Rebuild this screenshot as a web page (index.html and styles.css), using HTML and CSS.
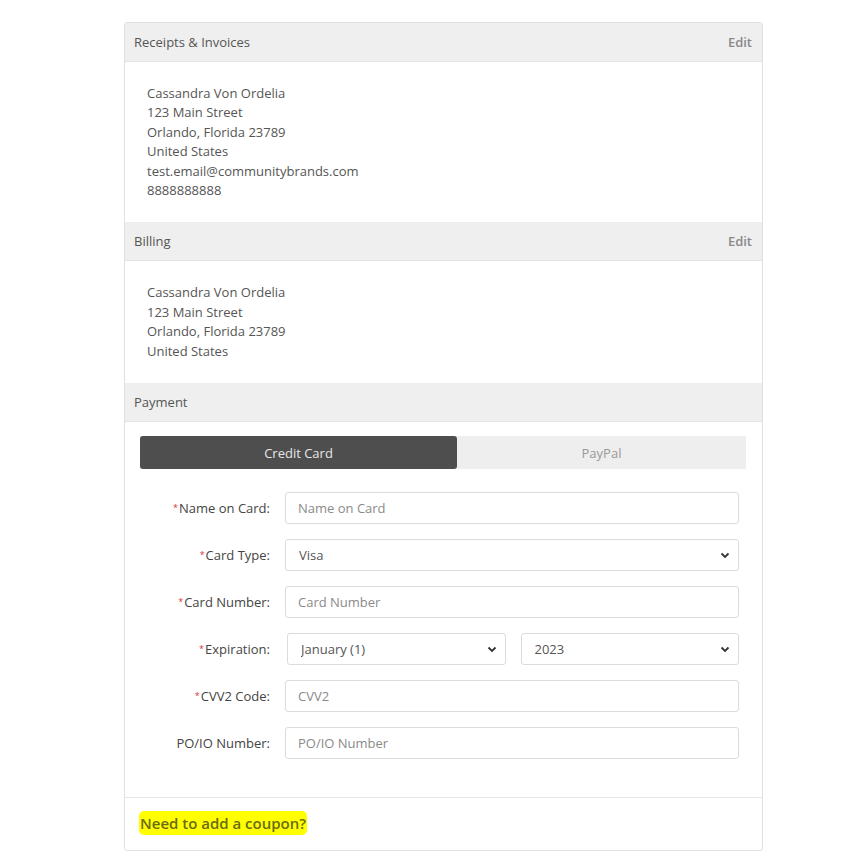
FILE: index.html
```html
<!DOCTYPE html>
<html lang="en">
<head>
    <meta charset="UTF-8">
    <meta name="viewport" content="width=device-width, initial-scale=1.0">
    <title>Checkout</title>
    <link rel="stylesheet" href="styles.css">
</head>
<body>
    <div class="panel">
        <div class="panel-heading">
            <span>Receipts &amp; Invoices</span>
            <a href="#" class="edit">Edit</a>
        </div>
        <div class="panel-body address">
            <div>Cassandra Von Ordelia</div>
            <div>123 Main Street</div>
            <div>Orlando, Florida 23789</div>
            <div>United States</div>
            <div>test.email@communitybrands.com</div>
            <div>8888888888</div>
        </div>

        <div class="panel-heading">
            <span>Billing</span>
            <a href="#" class="edit">Edit</a>
        </div>
        <div class="panel-body address">
            <div>Cassandra Von Ordelia</div>
            <div>123 Main Street</div>
            <div>Orlando, Florida 23789</div>
            <div>United States</div>
        </div>

        <div class="panel-heading">
            <span>Payment</span>
        </div>
        <div class="panel-body payment">
            <div class="tabs">
                <button class="tab active">Credit Card</button>
                <button class="tab">PayPal</button>
            </div>

            <form class="card-form">
                <div class="form-row">
                    <label><span class="req">*</span>Name on Card:</label>
                    <input type="text" placeholder="Name on Card">
                </div>
                <div class="form-row">
                    <label><span class="req">*</span>Card Type:</label>
                    <div class="select">
                        <select><option>Visa</option></select>
                        <svg class="chev" width="10" height="7" viewBox="0 0 10 7"><path d="M1.5 1.5 L5 5 L8.5 1.5" fill="none" stroke="#333" stroke-width="1.8"/></svg>
                    </div>
                </div>
                <div class="form-row">
                    <label><span class="req">*</span>Card Number:</label>
                    <input type="text" placeholder="Card Number">
                </div>
                <div class="form-row">
                    <label><span class="req">*</span>Expiration:</label>
                    <div class="split">
                        <div class="select month">
                            <select><option>January (1)</option></select>
                            <svg class="chev" width="10" height="7" viewBox="0 0 10 7"><path d="M1.5 1.5 L5 5 L8.5 1.5" fill="none" stroke="#333" stroke-width="1.8"/></svg>
                        </div>
                        <div class="select">
                            <select><option>2023</option></select>
                            <svg class="chev" width="10" height="7" viewBox="0 0 10 7"><path d="M1.5 1.5 L5 5 L8.5 1.5" fill="none" stroke="#333" stroke-width="1.8"/></svg>
                        </div>
                    </div>
                </div>
                <div class="form-row">
                    <label><span class="req">*</span>CVV2 Code:</label>
                    <input type="text" placeholder="CVV2">
                </div>
                <div class="form-row">
                    <label>PO/IO Number:</label>
                    <input type="text" placeholder="PO/IO Number">
                </div>
            </form>
        </div>

        <div class="panel-footer">
            <a href="#" class="coupon">Need to add a coupon?</a>
        </div>
    </div>
</body>
</html>
```

FILE: styles.css
```css
body {
    font-family: "Open Sans", "Liberation Sans", sans-serif;
    font-size: 13px;
    color: #555;
    background-color: #fff;
    margin: 0;
    padding: 22px 0 14px 124px;
}

.panel {
    width: 637px;
    border: 1px solid #e0e0e0;
    border-radius: 3px;
    background-color: #fff;
}

.panel-heading {
    display: flex;
    justify-content: space-between;
    align-items: center;
    height: 38px;
    padding: 0 10px 0 9px;
    background-color: #efefef;
    border-bottom: 1px solid #e3e3e3;
    color: #555;
}

.edit {
    color: #8a8a8a;
    font-weight: 600;
    text-decoration: none;
}

.address {
    padding: 22px 22px;
    line-height: 19.4px;
}

.payment {
    padding: 14px 16px 38px 15px;
    border-bottom: 1px solid #e6e6e6;
}

.tabs {
    display: flex;
    height: 33px;
    background-color: #eee;
}

.tab {
    border: none;
    font-family: inherit;
    font-size: 13px;
    background: transparent;
    color: #999;
    padding: 0;
    cursor: pointer;
}

.tab.active {
    width: 317px;
    background-color: #4e4e4e;
    color: #e6e6e6;
    border-radius: 3px;
}

.tab:not(.active) {
    flex: 1;
}

.card-form {
    margin-top: 23px;
    display: flex;
    flex-direction: column;
    gap: 15px;
    padding-right: 7px;
}

.form-row {
    display: flex;
    align-items: center;
    gap: 15px;
}

.form-row label {
    width: 130px;
    text-align: right;
    color: #444;
}

.req {
    color: #d9363e;
    font-size: 9px;
    vertical-align: 2px;
    margin-right: 1px;
}

.form-row input,
.select {
    flex: 1;
}

.form-row input,
.select select {
    box-sizing: border-box;
    height: 32px;
    width: 100%;
    border: 1px solid #dcdcdc;
    border-radius: 3px;
    padding: 0 12px;
    font-family: inherit;
    font-size: 13px;
    color: #555;
    background-color: #fff;
}

.form-row input::placeholder {
    color: #8a8a8a;
}

.select {
    position: relative;
}

.select select {
    appearance: none;
    -webkit-appearance: none;
    padding-left: 13px;
}

.chev {
    position: absolute;
    right: 9px;
    top: 13px;
    pointer-events: none;
}

.split {
    flex: 1;
    display: flex;
    gap: 15px;
}

.split .month {
    margin-left: 2px;
}

.panel-footer {
    padding: 13px 14px 15px 14px;
    height: 24px;
}

.coupon {
    display: inline-block;
    background-color: #ffff00;
    color: #6b6b14;
    font-size: 15px;
    font-weight: 600;
    text-decoration: none;
    padding: 2px 1px;
    border-radius: 5px;
    line-height: 20px;
}
```
